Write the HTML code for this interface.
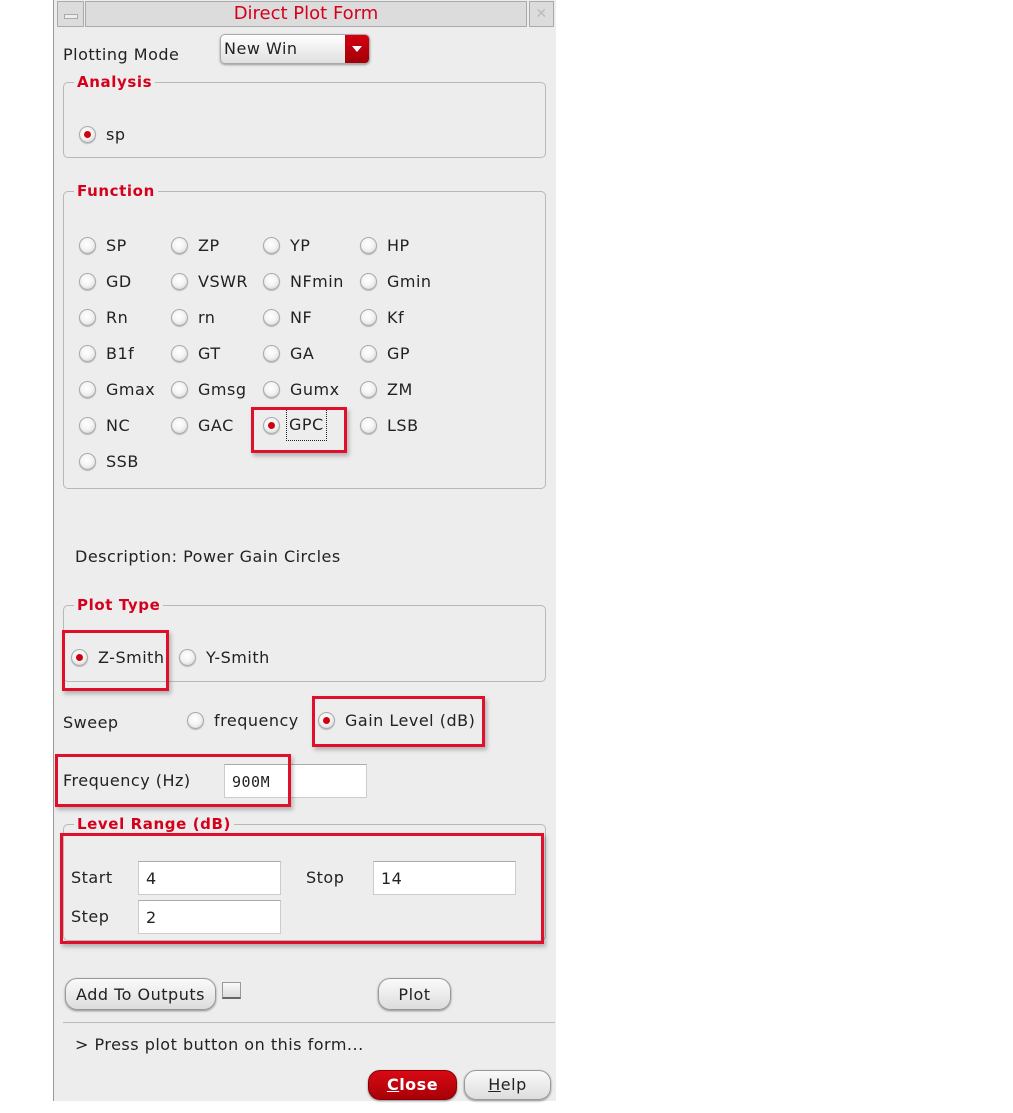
<!DOCTYPE html>
<html><head><meta charset="utf-8"><style>
body{margin:0;width:1013px;height:1113px;background:#fff;position:relative;overflow:hidden;font-family:"DejaVu Sans","Liberation Sans",sans-serif;font-size:16px;letter-spacing:0.5px;color:#222}
.p{position:absolute;left:53px;top:0;width:502px;height:1101px;background:#ededed;border-left:1px solid #999}
.a{position:absolute}
.t{position:absolute;line-height:18px;white-space:nowrap}
.r{position:absolute;width:15px;height:15px;border-radius:50%;background:radial-gradient(circle at 45% 40%,#fff 0,#f4f4f4 45%,#cfcfcf 100%);border:1px solid #aaa;box-shadow:0 1px 1px #bbb}
.r.on::after{content:"";position:absolute;left:4px;top:4px;width:7px;height:7px;border-radius:50%;background:#d00010}
.g{position:absolute;border:1px solid #b8b8b8;border-radius:5px}
.lg{position:absolute;background:#ededed;color:#d4001c;font-weight:bold;padding:0 3px;line-height:18px;font-size:15px;letter-spacing:0.6px}
.rb{position:absolute;border:3px solid #e0102a;box-shadow:2px 3px 4px rgba(0,0,0,.25)}
.in{position:absolute;background:#fff;border:1px solid #ccc;border-top-color:#aaa;height:34px;box-sizing:border-box;padding:8px 7px;line-height:18px}
.btn{position:absolute;height:32px;border:1px solid #999;border-radius:12px;background:linear-gradient(#fafafa,#ddd);box-shadow:0 1px 2px #888;text-align:center;line-height:32px;box-sizing:border-box}
</style></head><body>
<div class="p"></div>
<div class="a" style="left:57px;top:1px;width:25px;height:24px;background:#dcdcdc;border:1px solid #aaa"><div class="a" style="left:6px;top:12px;width:12px;height:3px;background:#eee;border:1px solid #aaa"></div></div>
<div class="a" style="left:85px;top:1px;width:440px;height:24px;background:#dcdcdc;border:1px solid #aaa;color:#d4001c;font-size:18px;letter-spacing:0;text-align:center;line-height:24px">Direct Plot Form</div>
<div class="a" style="left:529px;top:1px;width:23px;height:24px;background:#dcdcdc;border:1px solid #aaa;color:#bbb;text-align:center;line-height:24px;font-size:14px">✕</div>

<div class="t" style="left:63px;top:46px">Plotting Mode</div>
<div class="a" style="left:220px;top:34px;width:148px;height:28px;border:1px solid #aaa;border-radius:5px;background:linear-gradient(#fff,#e0e0e0);box-shadow:0 1px 2px #999;overflow:hidden"><div class="t" style="left:3px;top:5px">New Win</div><div class="a" style="right:0;top:0;width:24px;height:28px;background:linear-gradient(#d40010,#a00008)"><div class="a" style="left:7px;top:11px;border-left:5px solid transparent;border-right:5px solid transparent;border-top:6px solid #fff"></div></div></div>

<div class="g" style="left:63px;top:82px;width:481px;height:74px"></div>
<div class="lg" style="left:74px;top:73px">Analysis</div>
<div class="r on" style="left:79px;top:126px"></div><div class="t" style="left:106px;top:126px">sp</div>

<div class="g" style="left:63px;top:191px;width:481px;height:296px"></div>
<div class="lg" style="left:74px;top:182px">Function</div>

<div class="r" style="left:79px;top:237px"></div><div class="t" style="left:106px;top:237px">SP</div>
<div class="r" style="left:171px;top:237px"></div><div class="t" style="left:198px;top:237px">ZP</div>
<div class="r" style="left:263px;top:237px"></div><div class="t" style="left:290px;top:237px">YP</div>
<div class="r" style="left:360px;top:237px"></div><div class="t" style="left:387px;top:237px">HP</div>

<div class="r" style="left:79px;top:273px"></div><div class="t" style="left:106px;top:273px">GD</div>
<div class="r" style="left:171px;top:273px"></div><div class="t" style="left:198px;top:273px">VSWR</div>
<div class="r" style="left:263px;top:273px"></div><div class="t" style="left:290px;top:273px">NFmin</div>
<div class="r" style="left:360px;top:273px"></div><div class="t" style="left:387px;top:273px">Gmin</div>

<div class="r" style="left:79px;top:309px"></div><div class="t" style="left:106px;top:309px">Rn</div>
<div class="r" style="left:171px;top:309px"></div><div class="t" style="left:198px;top:309px">rn</div>
<div class="r" style="left:263px;top:309px"></div><div class="t" style="left:290px;top:309px">NF</div>
<div class="r" style="left:360px;top:309px"></div><div class="t" style="left:387px;top:309px">Kf</div>

<div class="r" style="left:79px;top:345px"></div><div class="t" style="left:106px;top:345px">B1f</div>
<div class="r" style="left:171px;top:345px"></div><div class="t" style="left:198px;top:345px">GT</div>
<div class="r" style="left:263px;top:345px"></div><div class="t" style="left:290px;top:345px">GA</div>
<div class="r" style="left:360px;top:345px"></div><div class="t" style="left:387px;top:345px">GP</div>

<div class="r" style="left:79px;top:381px"></div><div class="t" style="left:106px;top:381px">Gmax</div>
<div class="r" style="left:171px;top:381px"></div><div class="t" style="left:198px;top:381px">Gmsg</div>
<div class="r" style="left:263px;top:381px"></div><div class="t" style="left:290px;top:381px">Gumx</div>
<div class="r" style="left:360px;top:381px"></div><div class="t" style="left:387px;top:381px">ZM</div>

<div class="r" style="left:79px;top:417px"></div><div class="t" style="left:106px;top:417px">NC</div>
<div class="r" style="left:171px;top:417px"></div><div class="t" style="left:198px;top:417px">GAC</div>
<div class="r on" style="left:263px;top:417px"></div><div class="t" style="left:286px;top:409px;border:1px dotted #222;padding:6px 2px;line-height:18px">GPC</div>
<div class="r" style="left:360px;top:417px"></div><div class="t" style="left:387px;top:417px">LSB</div>

<div class="r" style="left:79px;top:453px"></div><div class="t" style="left:106px;top:453px">SSB</div>
<div class="rb" style="left:251px;top:407px;width:90px;height:40px"></div>

<div class="t" style="left:75px;top:548px">Description: Power Gain Circles</div>

<div class="g" style="left:63px;top:605px;width:481px;height:75px"></div>
<div class="lg" style="left:74px;top:596px">Plot Type</div>
<div class="r on" style="left:71px;top:649px"></div><div class="t" style="left:98px;top:649px">Z-Smith</div>
<div class="r" style="left:179px;top:649px"></div><div class="t" style="left:206px;top:649px">Y-Smith</div>
<div class="rb" style="left:62px;top:630px;width:101px;height:55px"></div>

<div class="t" style="left:63px;top:714px">Sweep</div>
<div class="r" style="left:187px;top:712px"></div><div class="t" style="left:214px;top:712px">frequency</div>
<div class="r on" style="left:318px;top:712px"></div><div class="t" style="left:345px;top:712px">Gain Level (dB)</div>
<div class="rb" style="left:312px;top:696px;width:167px;height:45px"></div>

<div class="t" style="left:63px;top:772px">Frequency (Hz)</div>
<div class="in" style="left:224px;top:764px;width:143px;font-family:'DejaVu Sans Mono','Liberation Mono',monospace;font-size:15px;letter-spacing:0.5px">900M</div>
<div class="rb" style="left:55px;top:754px;width:230px;height:47px"></div>

<div class="g" style="left:63px;top:824px;width:481px;height:115px"></div>
<div class="lg" style="left:74px;top:815px">Level Range (dB)</div>
<div class="t" style="left:71px;top:869px">Start</div>
<div class="in" style="left:138px;top:861px;width:143px">4</div>
<div class="t" style="left:306px;top:869px">Stop</div>
<div class="in" style="left:373px;top:861px;width:143px">14</div>
<div class="t" style="left:71px;top:908px">Step</div>
<div class="in" style="left:138px;top:900px;width:143px">2</div>
<div class="rb" style="left:60px;top:833px;width:478px;height:105px"></div>

<div class="btn" style="left:65px;top:978px;width:151px">Add To Outputs</div>
<div class="a" style="left:222px;top:982px;width:17px;height:14px;border:1px solid #999;background:linear-gradient(#fafafa,#ddd);border-bottom:2px solid #666"></div>
<div class="btn" style="left:378px;top:978px;width:73px">Plot</div>
<div class="a" style="left:63px;top:1022px;width:492px;height:1px;background:#bbb"></div>
<div class="t" style="left:75px;top:1036px">&gt; Press plot button on this form...</div>
<div class="btn" style="left:368px;top:1070px;width:89px;height:30px;line-height:28px;background:linear-gradient(#d80a14,#a80008);color:#fff;font-weight:bold;border-color:#800"><u>C</u>lose</div>
<div class="btn" style="left:464px;top:1070px;width:87px;height:30px;line-height:28px"><u>H</u>elp</div>
</body></html>
